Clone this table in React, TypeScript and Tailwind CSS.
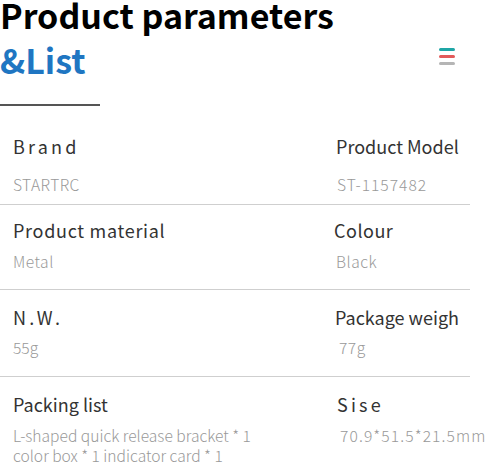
import React from 'react';

type CellData = { label: string; value: string[]; lt: string; vt: string };

const rows: { left: CellData; right: CellData; pad: string; gap: string }[] = [
  {
    left: { label: 'Brand', value: ['STARTRC'], lt: 'tracking-[3.2px]', vt: 'tracking-[0.4px]' },
    right: { label: 'Product Model', value: ['ST-1157482'], lt: 'tracking-[0px]', vt: 'tracking-[1px] pl-[1px]' },
    pad: 'pt-[29px] pb-[10px]',
    gap: 'mt-[17px]',
  },
  {
    left: { label: 'Product material', value: ['Metal'], lt: 'tracking-[0.7px]', vt: 'tracking-[0.5px]' },
    right: { label: 'Colour', value: ['Black'], lt: 'tracking-[0.5px] -ml-[2px]', vt: 'tracking-[0.5px]' },
    pad: 'pt-[14px] pb-[18px]',
    gap: 'mt-[10px]',
  },
  {
    left: { label: 'N.W.', value: ['55g'], lt: 'tracking-[3.2px]', vt: 'tracking-[0px]' },
    right: { label: 'Package weigh', value: ['77g'], lt: 'tracking-[0px] -ml-[1px]', vt: 'tracking-[0.5px] pl-[3px]' },
    pad: 'pt-[16px] pb-[19px]',
    gap: 'mt-[9px]',
  },
  {
    left: { label: 'Packing list', value: ['L-shaped quick release bracket * 1', 'color box * 1 indicator card * 1'], lt: 'tracking-[0px]', vt: 'tracking-[0px]' },
    right: { label: 'Sise', value: ['70.9*51.5*21.5mm'], lt: 'tracking-[3.2px] pl-[1px]', vt: 'tracking-[1.1px] pl-[4px]' },
    pad: 'pt-[16px]',
    gap: 'mt-[10px]',
  },
];

function Cell({ label, value, lt, vt, gap }: CellData & { gap: string }) {
  return (
    <div className="whitespace-nowrap">
      <div className={`text-[18px] leading-[22px] text-[#333] ${lt}`}>{label}</div>
      <div className={`${gap} text-[15.6px] leading-[20px] font-light text-[#999] ${vt}`}>
        {value.map((v) => (
          <div key={v}>{v}</div>
        ))}
      </div>
    </div>
  );
}

export default function App() {
  return (
    <div className="w-[488px] h-[464px] overflow-hidden bg-white" style={{ fontFamily: '"Noto Sans CJK SC", "Noto Sans", sans-serif' }}>
      <div className="flex items-end justify-between pr-[33px]">
        <div>
          <h1 className="text-[34px] leading-[30px] font-bold text-black whitespace-nowrap">Product parameters</h1>
          <h2 className="text-[34px] leading-[34px] font-bold text-[#1f76c2] mt-[13px]">&amp;List</h2>
        </div>
        <div className="flex flex-col gap-[4px] mb-[12px]">
          <span className="block w-[16px] h-[3px] rounded-full bg-[#1ea6a6]" />
          <span className="block w-[16px] h-[3px] rounded-full bg-[#e25a5a]" />
          <span className="block w-[16px] h-[3px] rounded-full bg-[#b5b5b5]" />
        </div>
      </div>
      <div className="mt-[27px] w-[100px] h-[2px] bg-[#555]" />
      <div className="w-[470px]">
        {rows.map((r, i) => (
          <div key={i} className={`grid grid-cols-[323px_1fr] pl-[13px] ${r.pad} ${i < rows.length - 1 ? 'border-b border-[#cfcfcf]' : ''}`}>
            <Cell {...r.left} gap={r.gap} />
            <Cell {...r.right} gap={r.gap} />
          </div>
        ))}
      </div>
    </div>
  );
}
